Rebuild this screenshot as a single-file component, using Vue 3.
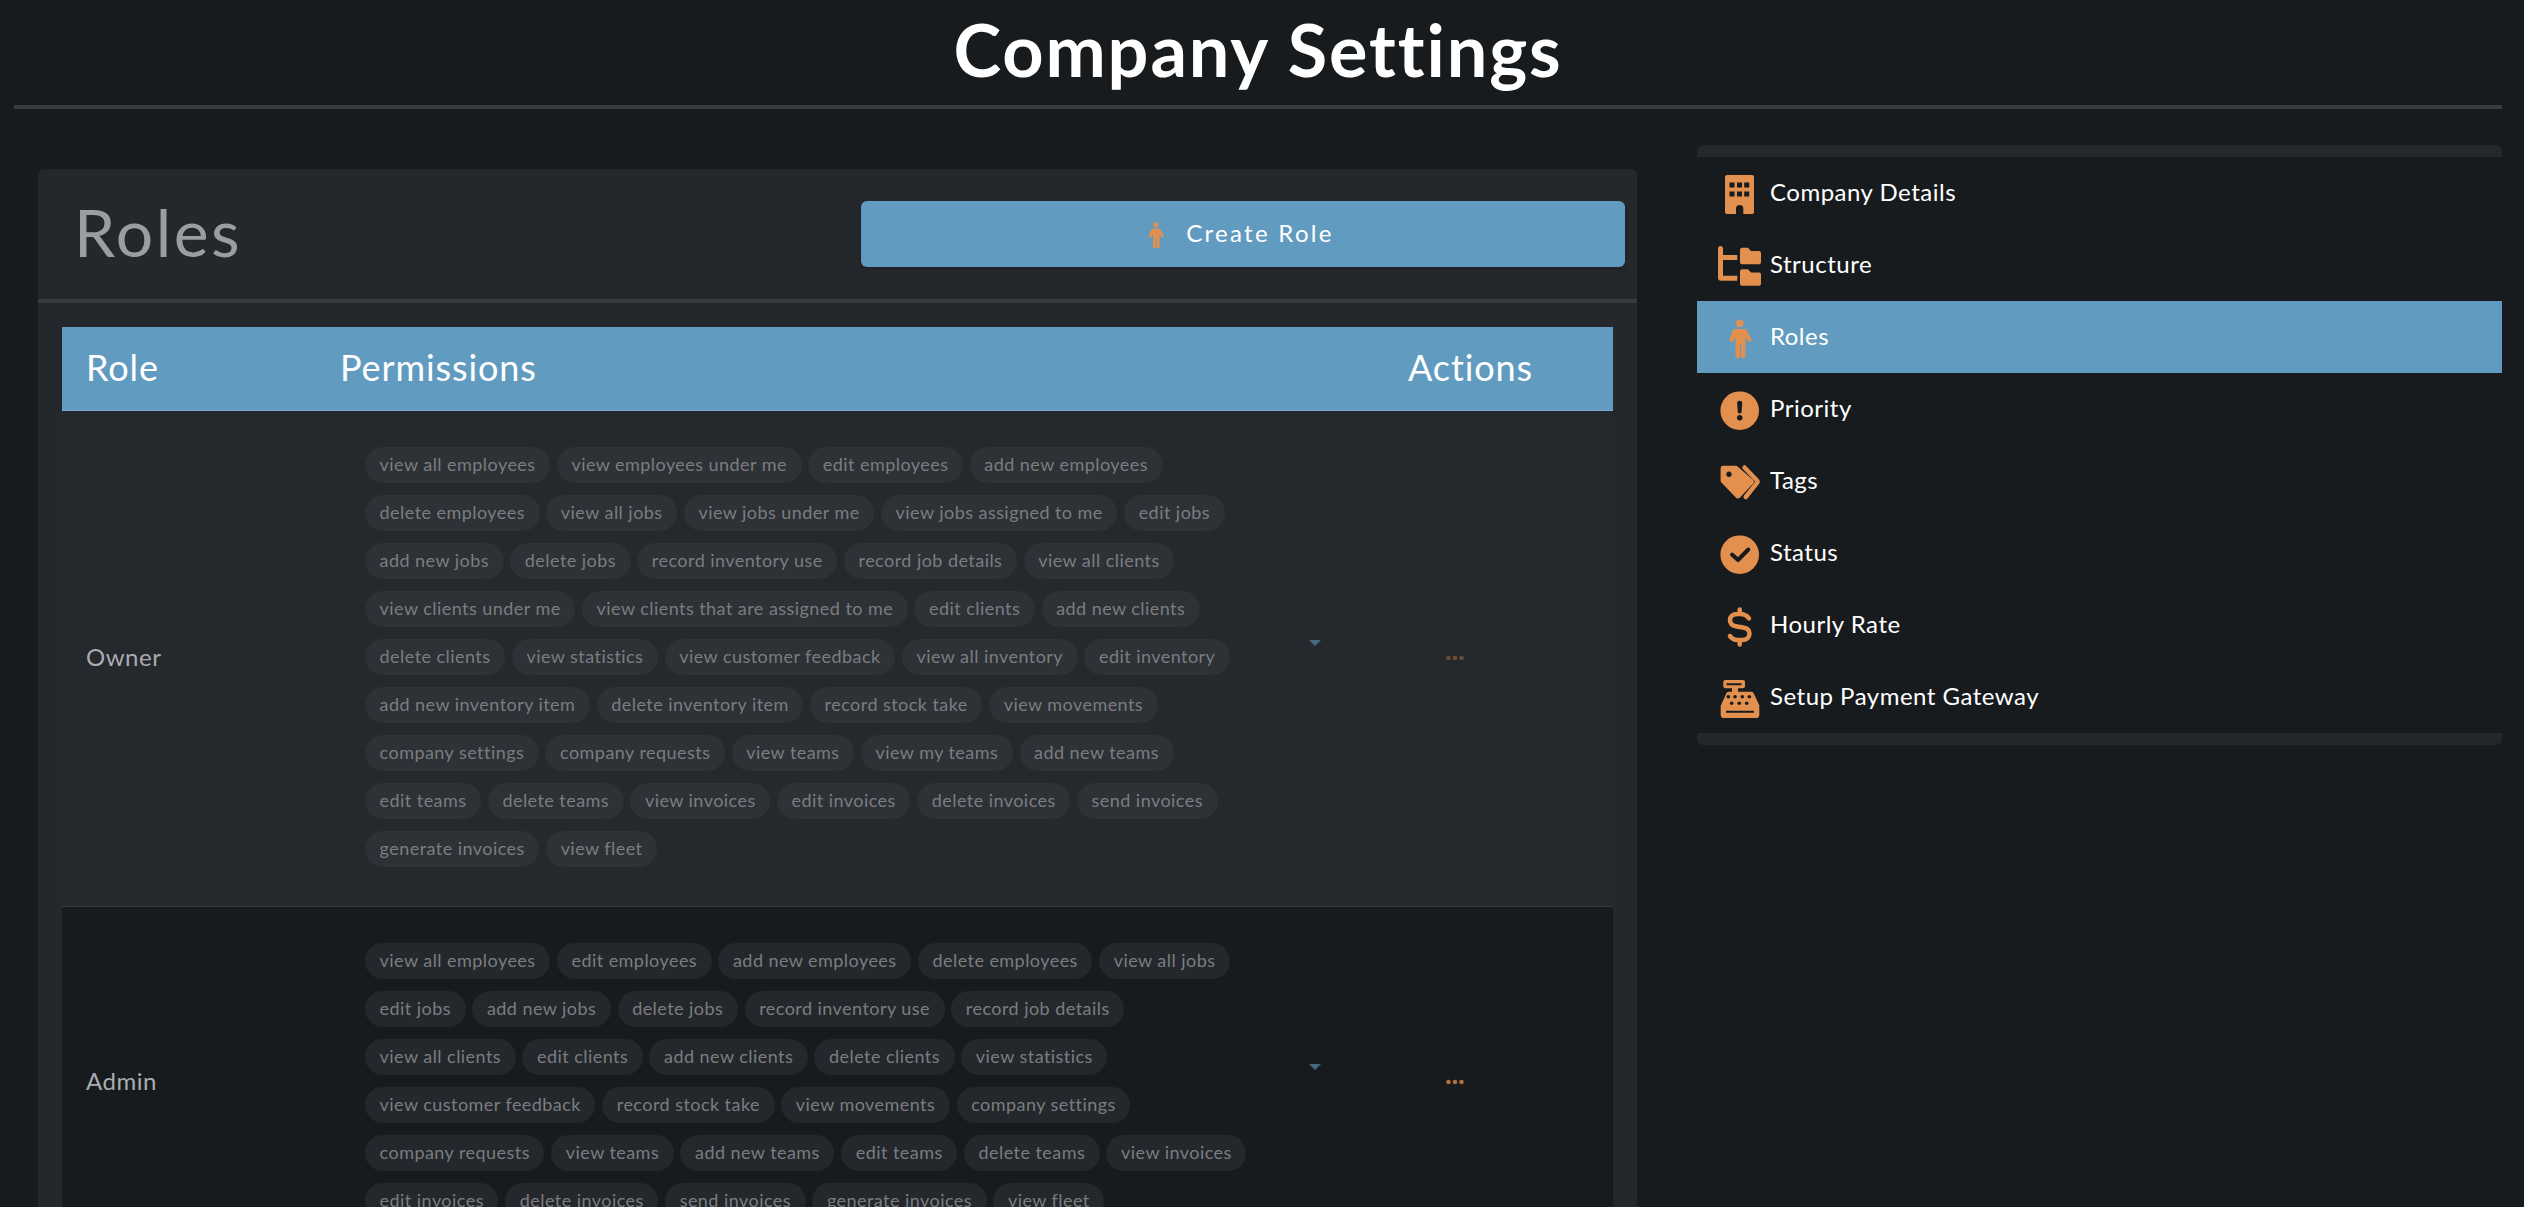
<script setup>
const menu = [
  { name: 'Company Details', icon: 'building' },
  { name: 'Structure', icon: 'structure' },
  { name: 'Roles', icon: 'male', active: true },
  { name: 'Priority', icon: 'priority' },
  { name: 'Tags', icon: 'tags' },
  { name: 'Status', icon: 'status' },
  { name: 'Hourly Rate', icon: 'dollar' },
  { name: 'Setup Payment Gateway', icon: 'register' }
]

const roles = [
  {
    name: 'Owner',
    lines: [
      ['view all employees', 'view employees under me', 'edit employees', 'add new employees'],
      ['delete employees', 'view all jobs', 'view jobs under me', 'view jobs assigned to me', 'edit jobs'],
      ['add new jobs', 'delete jobs', 'record inventory use', 'record job details', 'view all clients'],
      ['view clients under me', 'view clients that are assigned to me', 'edit clients', 'add new clients'],
      ['delete clients', 'view statistics', 'view customer feedback', 'view all inventory', 'edit inventory'],
      ['add new inventory item', 'delete inventory item', 'record stock take', 'view movements'],
      ['company settings', 'company requests', 'view teams', 'view my teams', 'add new teams'],
      ['edit teams', 'delete teams', 'view invoices', 'edit invoices', 'delete invoices', 'send invoices'],
      ['generate invoices', 'view fleet']
    ]
  },
  {
    name: 'Admin',
    lines: [
      ['view all employees', 'edit employees', 'add new employees', 'delete employees', 'view all jobs'],
      ['edit jobs', 'add new jobs', 'delete jobs', 'record inventory use', 'record job details'],
      ['view all clients', 'edit clients', 'add new clients', 'delete clients', 'view statistics'],
      ['view customer feedback', 'record stock take', 'view movements', 'company settings'],
      ['company requests', 'view teams', 'add new teams', 'edit teams', 'delete teams', 'view invoices'],
      ['edit invoices', 'delete invoices', 'send invoices', 'generate invoices', 'view fleet']
    ]
  }
]
</script>

<template>
  <main class="page">
    <h1 class="pageTitle">Company Settings</h1>
    <div class="rule"></div>

    <div class="columns">
      <section class="card">
        <header class="cardHead">
          <h2>Roles</h2>
          <button class="createBtn">
            <svg class="btnIcon" viewBox="0 0 48 48">
              <circle cx="23.7" cy="10.3" r="3.8" />
              <path d="M18.5 16h10.500l1.500 1 5.500 10.500-3.500 2-3-5.500V43a2 2 0 0 1-4.500 0V31h-1v12a2 2 0 0 1-4.500 0V24l-3 5.500-3.500-2L17 17z" />
            </svg>
            <span class="btnText">Create Role</span>
          </button>
        </header>

        <div class="tableWrap">
          <div class="tHead">
            <div>Role</div>
            <div>Permissions</div>
            <div>Actions</div>
          </div>

          <div class="tRow" v-for="role in roles" :key="role.name">
            <div class="roleName">{{ role.name }}</div>
            <div class="permCell">
              <div class="chips">
                <div class="chipLine" v-for="(line, i) in role.lines" :key="i">
                  <span class="chip" v-for="perm in line" :key="perm">{{ perm }}</span>
                </div>
              </div>
              <span class="caret"></span>
            </div>
            <div class="actionCell">
              <svg class="dots" viewBox="0 0 18 6">
                <circle cx="2.500" cy="3" r="2.300" />
                <circle cx="9" cy="3" r="2.300" />
                <circle cx="15.500" cy="3" r="2.300" />
              </svg>
            </div>
          </div>
        </div>
      </section>

      <aside class="side">
        <div class="sideCap top"></div>
        <a class="sideItem" :class="{ active: item.active }" v-for="item in menu" :key="item.name">
          <svg class="sideIcon" viewBox="0 0 48 48">
            <template v-if="item.icon === 'building'">
              <path fill-rule="evenodd" d="M11 6h25a2 2 0 0 1 2 2v35a2 2 0 0 1-2 2h-8.700v-6a3.700 3.700 0 0 0-7.300 0v6h-9a2 2 0 0 1-2-2V8a2 2 0 0 1 2-2zM13.500 13.500v5h5v-5zM21 13.500v5h5v-5zM28.200 13.500v5h5v-5zM13.500 22.500v5h5v-5zM21 22.500v5h5v-5zM28.200 22.500v5h5v-5z" />
            </template>
            <template v-else-if="item.icon === 'structure'">
              <path d="M2 7.500a2.500 2.500 0 0 1 5 0V14h14.300v5H7v15.700h14.300v5H5a3 3 0 0 1-3-3z" />
              <path d="M26 6.700h6l3 3.300h8a2 2 0 0 1 2 2v9.300a2 2 0 0 1-2 2H26a2 2 0 0 1-2-2V8.700a2 2 0 0 1 2-2z" />
              <path d="M26 28.300h6l3 3.300h8a2 2 0 0 1 2 2v9.100a2 2 0 0 1-2 2H26a2 2 0 0 1-2-2V30.300a2 2 0 0 1 2-2z" />
            </template>
            <template v-else-if="item.icon === 'male'">
              <circle cx="23.700" cy="10.300" r="3.800" />
              <path d="M18.500 16h10.500l1.500 1 5.500 10.500-3.500 2-3-5.500V43a2 2 0 0 1-4.500 0V31h-1v12a2 2 0 0 1-4.500 0V24l-3 5.500-3.500-2L17 17z" />
            </template>
            <template v-else-if="item.icon === 'priority'">
              <circle cx="23.700" cy="25.700" r="19.300" />
              <path class="cut" d="M23.700 15.700a2.500 2.500 0 0 1 2.500 2.700l-.6 8.300a1.900 1.900 0 0 1-3.800 0l-.6-8.300a2.500 2.500 0 0 1 2.500-2.700z" />
              <circle class="cut" cx="23.700" cy="32.800" r="2.700" />
            </template>
            <template v-else-if="item.icon === 'tags'">
              <path fill-rule="evenodd" d="M7.200 8.700h12a4 4 0 0 1 3 1.200l15 13a2.500 2.500 0 0 1 0 3.600l-13 13.800a3.200 3.200 0 0 1-4.600 0l-14-14.500a3.600 3.600 0 0 1-1-2.600V11.200a2.500 2.500 0 0 1 2.600-2.500zM13 14.600a2.700 2.700 0 1 0 .01 0z" />
              <path class="line" d="M28.500 10.500l12.300 12.700a2.200 2.200 0 0 1 0 3L29.700 40" />
            </template>
            <template v-else-if="item.icon === 'status'">
              <circle cx="23.700" cy="25.700" r="19.300" />
              <path class="cutLine" d="M16 25.500l6 5.500 10.300-10.500" />
            </template>
            <template v-else-if="item.icon === 'dollar'">
              <path class="line" d="M23.700 8.500v4.500M23.700 39v4.500M33 17.500C31 14.500 28 13 24 13h-2.500C16.500 13 14 15.500 14 19c0 4 3 6 7 6.500l6 1c4 .7 6.500 2.500 6.500 6 0 3.500-2.500 6.500-7.500 6.500h-4c-4 0-6.500-1.500-8-4" />
            </template>
            <template v-else>
              <path fill-rule="evenodd" d="M9.300 7h17.700a2 2 0 0 1 2 2v4.300a2 2 0 0 1-2 2h-5v3.400h13a3 3 0 0 1 3 2.200l5.300 11.300V42a3 3 0 0 1-3 3H7.700a3 3 0 0 1-3-3v-9.200L10 21a3 3 0 0 1 3-2.300h3v-3.400H9.300a2 2 0 0 1-2-2V9a2 2 0 0 1 2-2zM10.500 10.200v2h15v-2zM10 37.700v2h28v-2z" />
              <g class="cut">
                <circle cx="12.300" cy="23.700" r="1.800" /><circle cx="19" cy="23.700" r="1.800" /><circle cx="26.300" cy="23.700" r="1.800" /><circle cx="33.300" cy="23.700" r="1.800" />
                <circle cx="15.700" cy="30.300" r="1.800" /><circle cx="23.300" cy="30.300" r="1.800" /><circle cx="30.700" cy="30.300" r="1.800" />
              </g>
            </template>
          </svg>
          <span class="sideText">{{ item.name }}</span>
        </a>
        <div class="sideCap bottom"></div>
      </aside>
    </div>
  </main>
</template>

<style>
html, body {
  margin: 0;
  background: #171b1e;
  overflow: hidden;
}
</style>

<style scoped>
* {
  box-sizing: border-box;
}
.page {
  padding: 0 22px 0 14px;
  height: 1207px;
  overflow: hidden;
  color: #fff;
  font-family: Lato, "Noto Sans", sans-serif;
  font-variant-ligatures: none;
}
.pageTitle {
  margin: 0;
  height: 105px;
  line-height: 98px;
  text-align: center;
  font-size: 72px;
  font-weight: 700;
  letter-spacing: 1.900px;
}
.rule {
  height: 4px;
  background: #383b40;
}
.columns {
  display: flex;
  gap: 60px;
  padding-left: 24px;
  margin-top: 36px;
  align-items: flex-start;
}
.card {
  width: 1599px;
  margin-top: 24px;
  background: #24272c;
  border-radius: 6px;
  flex: none;
}
.cardHead {
  display: flex;
  align-items: center;
  justify-content: space-between;
  padding: 32px 12px 32px 36px;
  border-bottom: 4px solid #383b40;
  height: 134px;
}
.cardHead h2 {
  margin: 0 0 5px;
  font-size: 66px;
  font-weight: 400;
  letter-spacing: 2.500px;
  color: #9a9da1;
}
.createBtn {
  width: 764px;
  height: 66px;
  border: none;
  border-radius: 6px;
  background: #629bc0;
  color: #fff;
  font-family: inherit;
  font-size: 24px;
  letter-spacing: 2.300px;
  display: flex;
  align-items: center;
  justify-content: center;
  gap: 14px;
  padding-right: 18px;
  box-shadow: 0 2px 4px rgba(0, 0, 0, 0.2);
}
.btnText {
  margin-bottom: 3px;
}
.btnIcon {
  width: 32px;
  height: 32px;
  fill: #e38f4e;
}
.tableWrap {
  padding: 24px;
}
.tHead {
  display: grid;
  grid-template-columns: 254px 1068px 229px;
  height: 84px;
  align-items: center;
  background: #629bc0;
  border-bottom: 1px solid #77acd0;
  font-size: 36px;
  letter-spacing: 0.900px;
}
.tHead div {
  padding: 0 0 4px 24px;
}
.tRow {
  display: grid;
  grid-template-columns: 254px 1068px 229px;
  border-bottom: 1px solid #383b40;
  background: #25282d;
  align-items: center;
}
.tRow:nth-of-type(odd) {
  background: #171b1e;
}
.roleName {
  padding: 0 0 4px 24px;
  font-size: 24px;
  letter-spacing: 0.500px;
  color: #a9abae;
}
.permCell {
  display: flex;
  align-items: center;
  justify-content: space-between;
  padding: 36px 63px 39px 49px;
}
.chips {
  display: flex;
  flex-direction: column;
  gap: 12px;
}
.chipLine {
  display: flex;
  gap: 6.700px;
}
.chip {
  height: 36px;
  line-height: 34px;
  padding: 0 14.600px;
  border-radius: 18px;
  background: #2e3136;
  color: #7a7d81;
  font-size: 18px;
  letter-spacing: 0.450px;
  white-space: nowrap;
}
.tRow:nth-of-type(odd) .chip {
  background: #24272b;
}
.caret {
  width: 0;
  height: 0;
  margin-bottom: 29px;
  border-left: 6.500px solid transparent;
  border-right: 6.500px solid transparent;
  border-top: 6.500px solid #436a80;
}
.actionCell {
  padding-left: 62px;
  padding-bottom: 2px;
  display: flex;
}
.dots {
  width: 18px;
  height: 6px;
  fill: #6b4c36;
}
.tRow:nth-of-type(odd) .dots {
  fill: #b0703f;
}
.side {
  width: 805px;
  flex: none;
}
.sideCap {
  height: 12px;
  background: #24272c;
}
.sideCap.top {
  border-radius: 6px 6px 0 0;
}
.sideCap.bottom {
  border-radius: 0 0 6px 6px;
}
.sideItem {
  display: flex;
  align-items: center;
  height: 72px;
  padding-left: 19px;
  gap: 6px;
  font-size: 24px;
  letter-spacing: 0.500px;
  color: #fff;
}
.sideText {
  margin-bottom: 3px;
}
.sideItem.active {
  background: #629bc0;
}
.sideIcon {
  width: 48px;
  height: 48px;
  fill: #e38f4e;
  flex: none;
}
.cut {
  fill: #171b1e;
}
.line {
  fill: none;
  stroke: #e38f4e;
  stroke-width: 4.500;
  stroke-linecap: round;
  stroke-linejoin: round;
}
.cutLine {
  fill: none;
  stroke: #171b1e;
  stroke-width: 4;
  stroke-linecap: round;
  stroke-linejoin: round;
}
</style>
